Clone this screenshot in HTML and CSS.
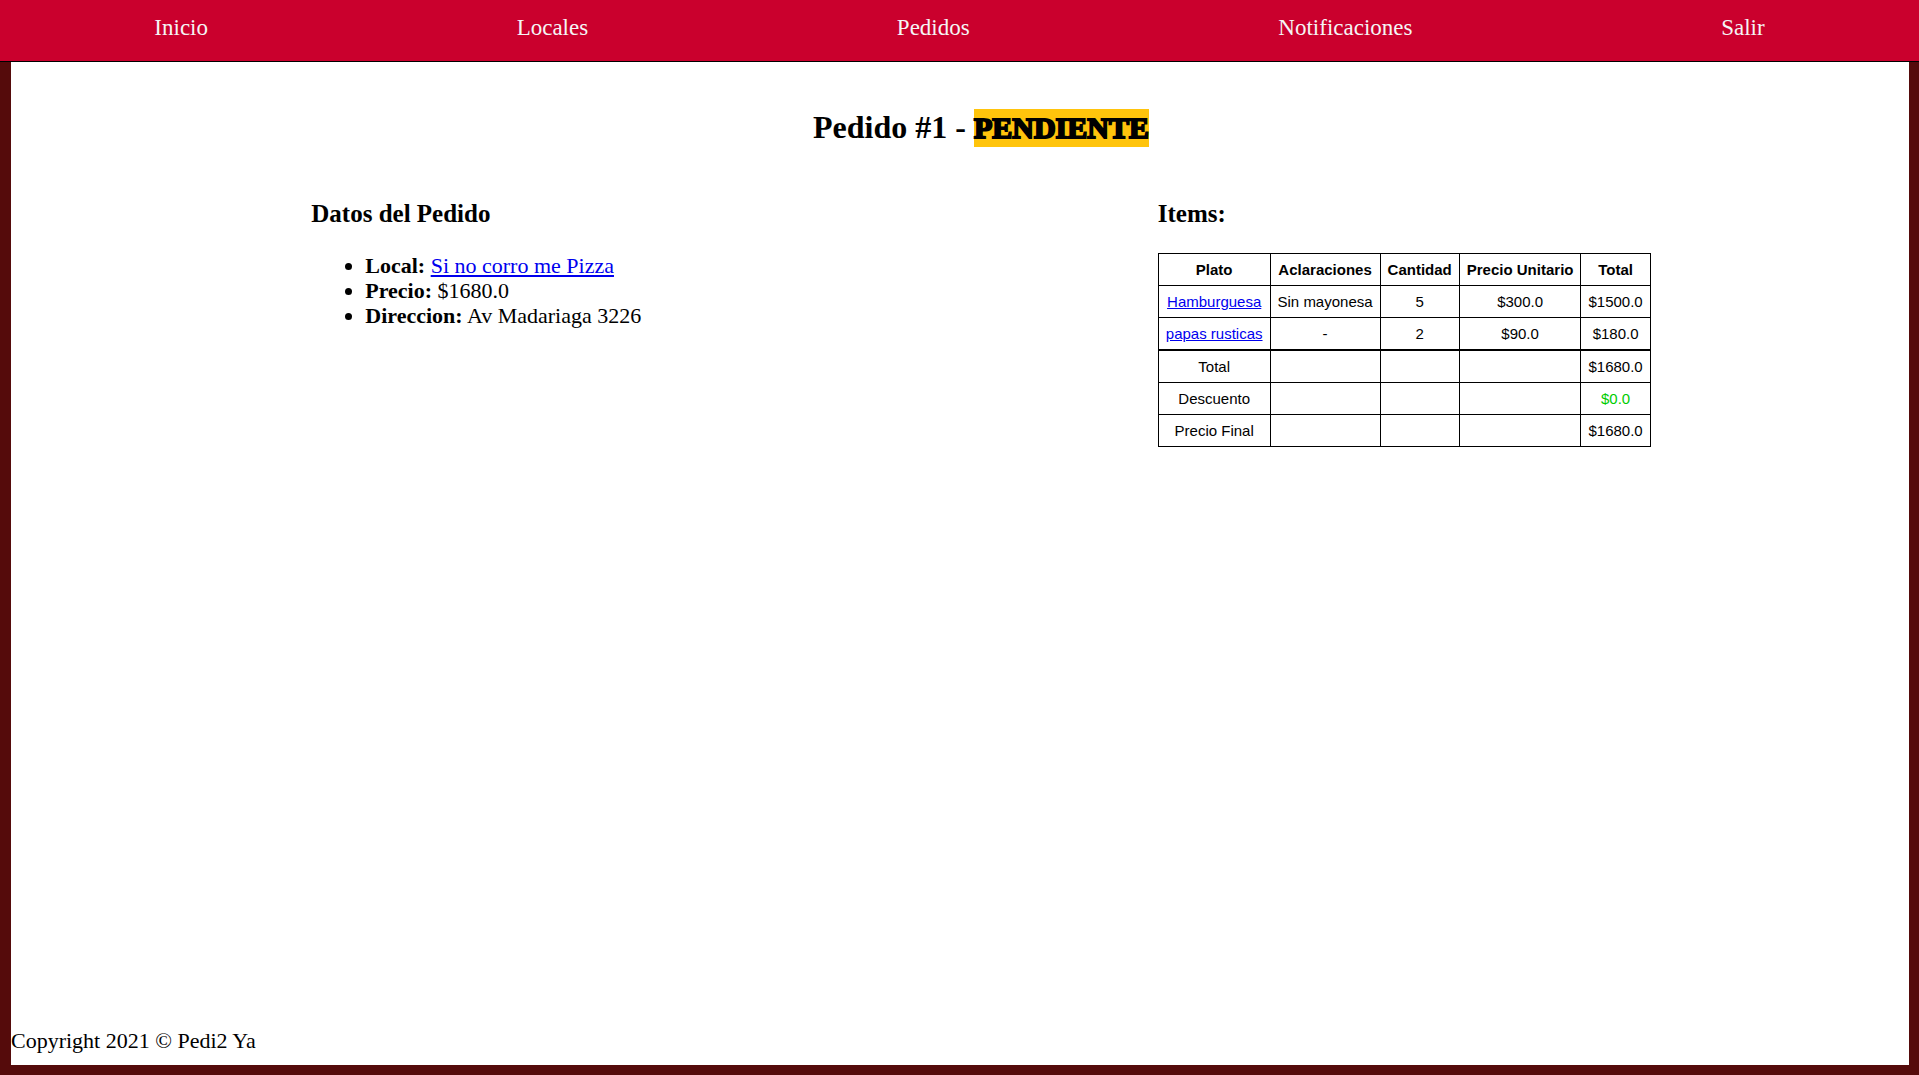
FILE: index.html
```html
<!DOCTYPE html>
<html lang="es">
<head>
  <meta charset="utf-8">
  <title>Pedido #1</title>
  <link rel="stylesheet" href="styles.css">
</head>
<body>
  <nav class="nav">
    <a href="#">Inicio</a>
    <a href="#">Locales</a>
    <a href="#">Pedidos</a>
    <a href="#">Notificaciones</a>
    <a href="#">Salir</a>
  </nav>
  <div class="page">
    <main class="order">
      <h1 class="order-title">Pedido #1 - <span class="status">PENDIENTE</span></h1>
      <div class="columns">
        <section>
          <h2 class="section-title">Datos del Pedido</h2>
          <ul class="details">
            <li><b>Local:</b> <a href="#">Si no corro me Pizza</a></li>
            <li><b>Precio:</b> $1680.0</li>
            <li><b>Direccion:</b> Av Madariaga 3226</li>
          </ul>
        </section>
        <section>
          <h2 class="section-title">Items:</h2>
          <table class="items">
            <thead>
              <tr><th>Plato</th><th>Aclaraciones</th><th>Cantidad</th><th>Precio Unitario</th><th>Total</th></tr>
            </thead>
            <tbody>
              <tr><td><a href="#">Hamburguesa</a></td><td>Sin mayonesa</td><td>5</td><td>$300.0</td><td>$1500.0</td></tr>
              <tr><td><a href="#">papas rusticas</a></td><td>-</td><td>2</td><td>$90.0</td><td>$180.0</td></tr>
            </tbody>
            <tfoot>
              <tr><td>Total</td><td></td><td></td><td></td><td>$1680.0</td></tr>
              <tr><td>Descuento</td><td></td><td></td><td></td><td class="discount">$0.0</td></tr>
              <tr><td>Precio Final</td><td></td><td></td><td></td><td>$1680.0</td></tr>
            </tfoot>
          </table>
        </section>
      </div>
    </main>
    <footer class="footer">Copyright 2021 © Pedi2 Ya</footer>
  </div>
</body>
</html>
```
FILE: styles.css
```css
* {
  box-sizing: border-box;
}

body {
  display: flex;
  flex-direction: column;
  min-height: 100vh;
  margin: 0;
  background: #550b0b;
  color: #000;
  font-family: "Liberation Serif", "Times New Roman", serif;
  font-size: 22px;
  line-height: 25px;
}

a {
  color: #0000ee;
}

.nav {
  display: flex;
  justify-content: space-around;
  padding: 15px 0 20px;
  background: #ca002d;
  border-bottom: 1px solid #000;
  font-size: 23px;
  line-height: 26px;
}

.nav a {
  color: whitesmoke;
  text-decoration: none;
}

.page {
  display: flex;
  flex: 1;
  flex-direction: column;
  margin: 0 10px 10px 11px;
  background: #fff;
}

.order {
  flex: 1;
  padding: 46px 0 0 42px;
}

.order-title {
  margin: 0;
  font-size: 32px;
  line-height: 38px;
  text-align: center;
}

.status {
  display: inline-block;
  background: #ffc40c;
  font-size: 30px;
  -webkit-text-stroke: 2px #000;
}

.columns {
  display: flex;
  justify-content: space-around;
  align-items: flex-start;
  margin-top: 52px;
}

.section-title {
  margin: 0 0 24px;
  font-size: 25px;
  line-height: 30px;
}

.details {
  margin: 0;
  padding-left: 54px;
}

.items {
  border-collapse: collapse;
  font-family: "Liberation Sans", Arial, sans-serif;
  font-size: 15px;
  line-height: 17px;
  text-align: center;
}

.items th,
.items td {
  padding: 7px;
  border: 1px solid #000;
}

.items tfoot {
  border-top: 2px solid #000;
}

.items .discount {
  color: #00cc00;
}

.footer {
  padding-bottom: 12px;
}
```
